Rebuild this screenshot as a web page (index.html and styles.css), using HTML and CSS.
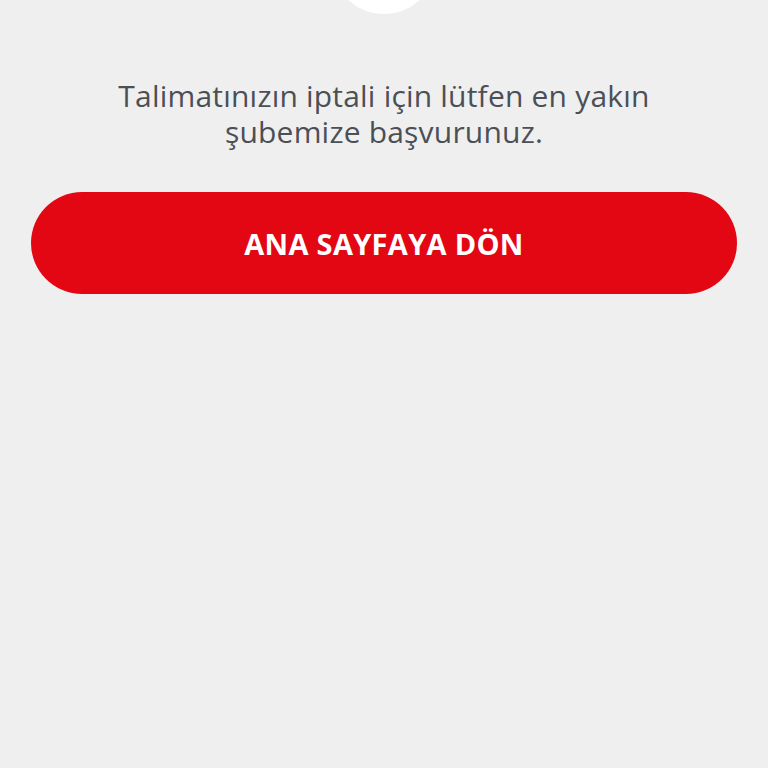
FILE: index.html
```html
<!DOCTYPE html>
<html lang="tr">
<head>
    <meta charset="UTF-8">
    <meta name="viewport" content="width=device-width, initial-scale=1.0">
    <title>Talimat İptali</title>
    <link rel="stylesheet" href="styles.css">
</head>
<body>
    <div class="page">
        <div class="icon-circle"></div>
        <p class="message">Talimatınızın iptali için lütfen en yakın<br>şubemize başvurunuz.</p>
        <button class="btn">ANA SAYFAYA DÖN</button>
    </div>
</body>
</html>
```

FILE: styles.css
```css
body {
    margin: 0;
    background: #efefef;
    font-family: "Open Sans", Arial, sans-serif;
    color: #4b5057;
}

.page {
    position: relative;
    height: 768px;
    overflow: hidden;
    padding: 0 31px;
    display: flex;
    flex-direction: column;
    align-items: center;
}

.icon-circle {
    position: absolute;
    top: -92px;
    left: 50%;
    width: 106px;
    height: 106px;
    margin-left: -53px;
    border-radius: 50%;
    background: #fff;
}

.message {
    margin: 78px 0 0;
    font-size: 30px;
    line-height: 36px;
    letter-spacing: 0.2px;
    text-align: center;
}

.btn {
    margin-top: 42px;
    width: 100%;
    height: 102px;
    border: none;
    border-radius: 51px;
    background-color: #e30613;
    color: #fff;
    font-family: "Open Sans", Arial, sans-serif;
    font-size: 29px;
    font-weight: 700;
    letter-spacing: 0.3px;
    cursor: pointer;
}
```
